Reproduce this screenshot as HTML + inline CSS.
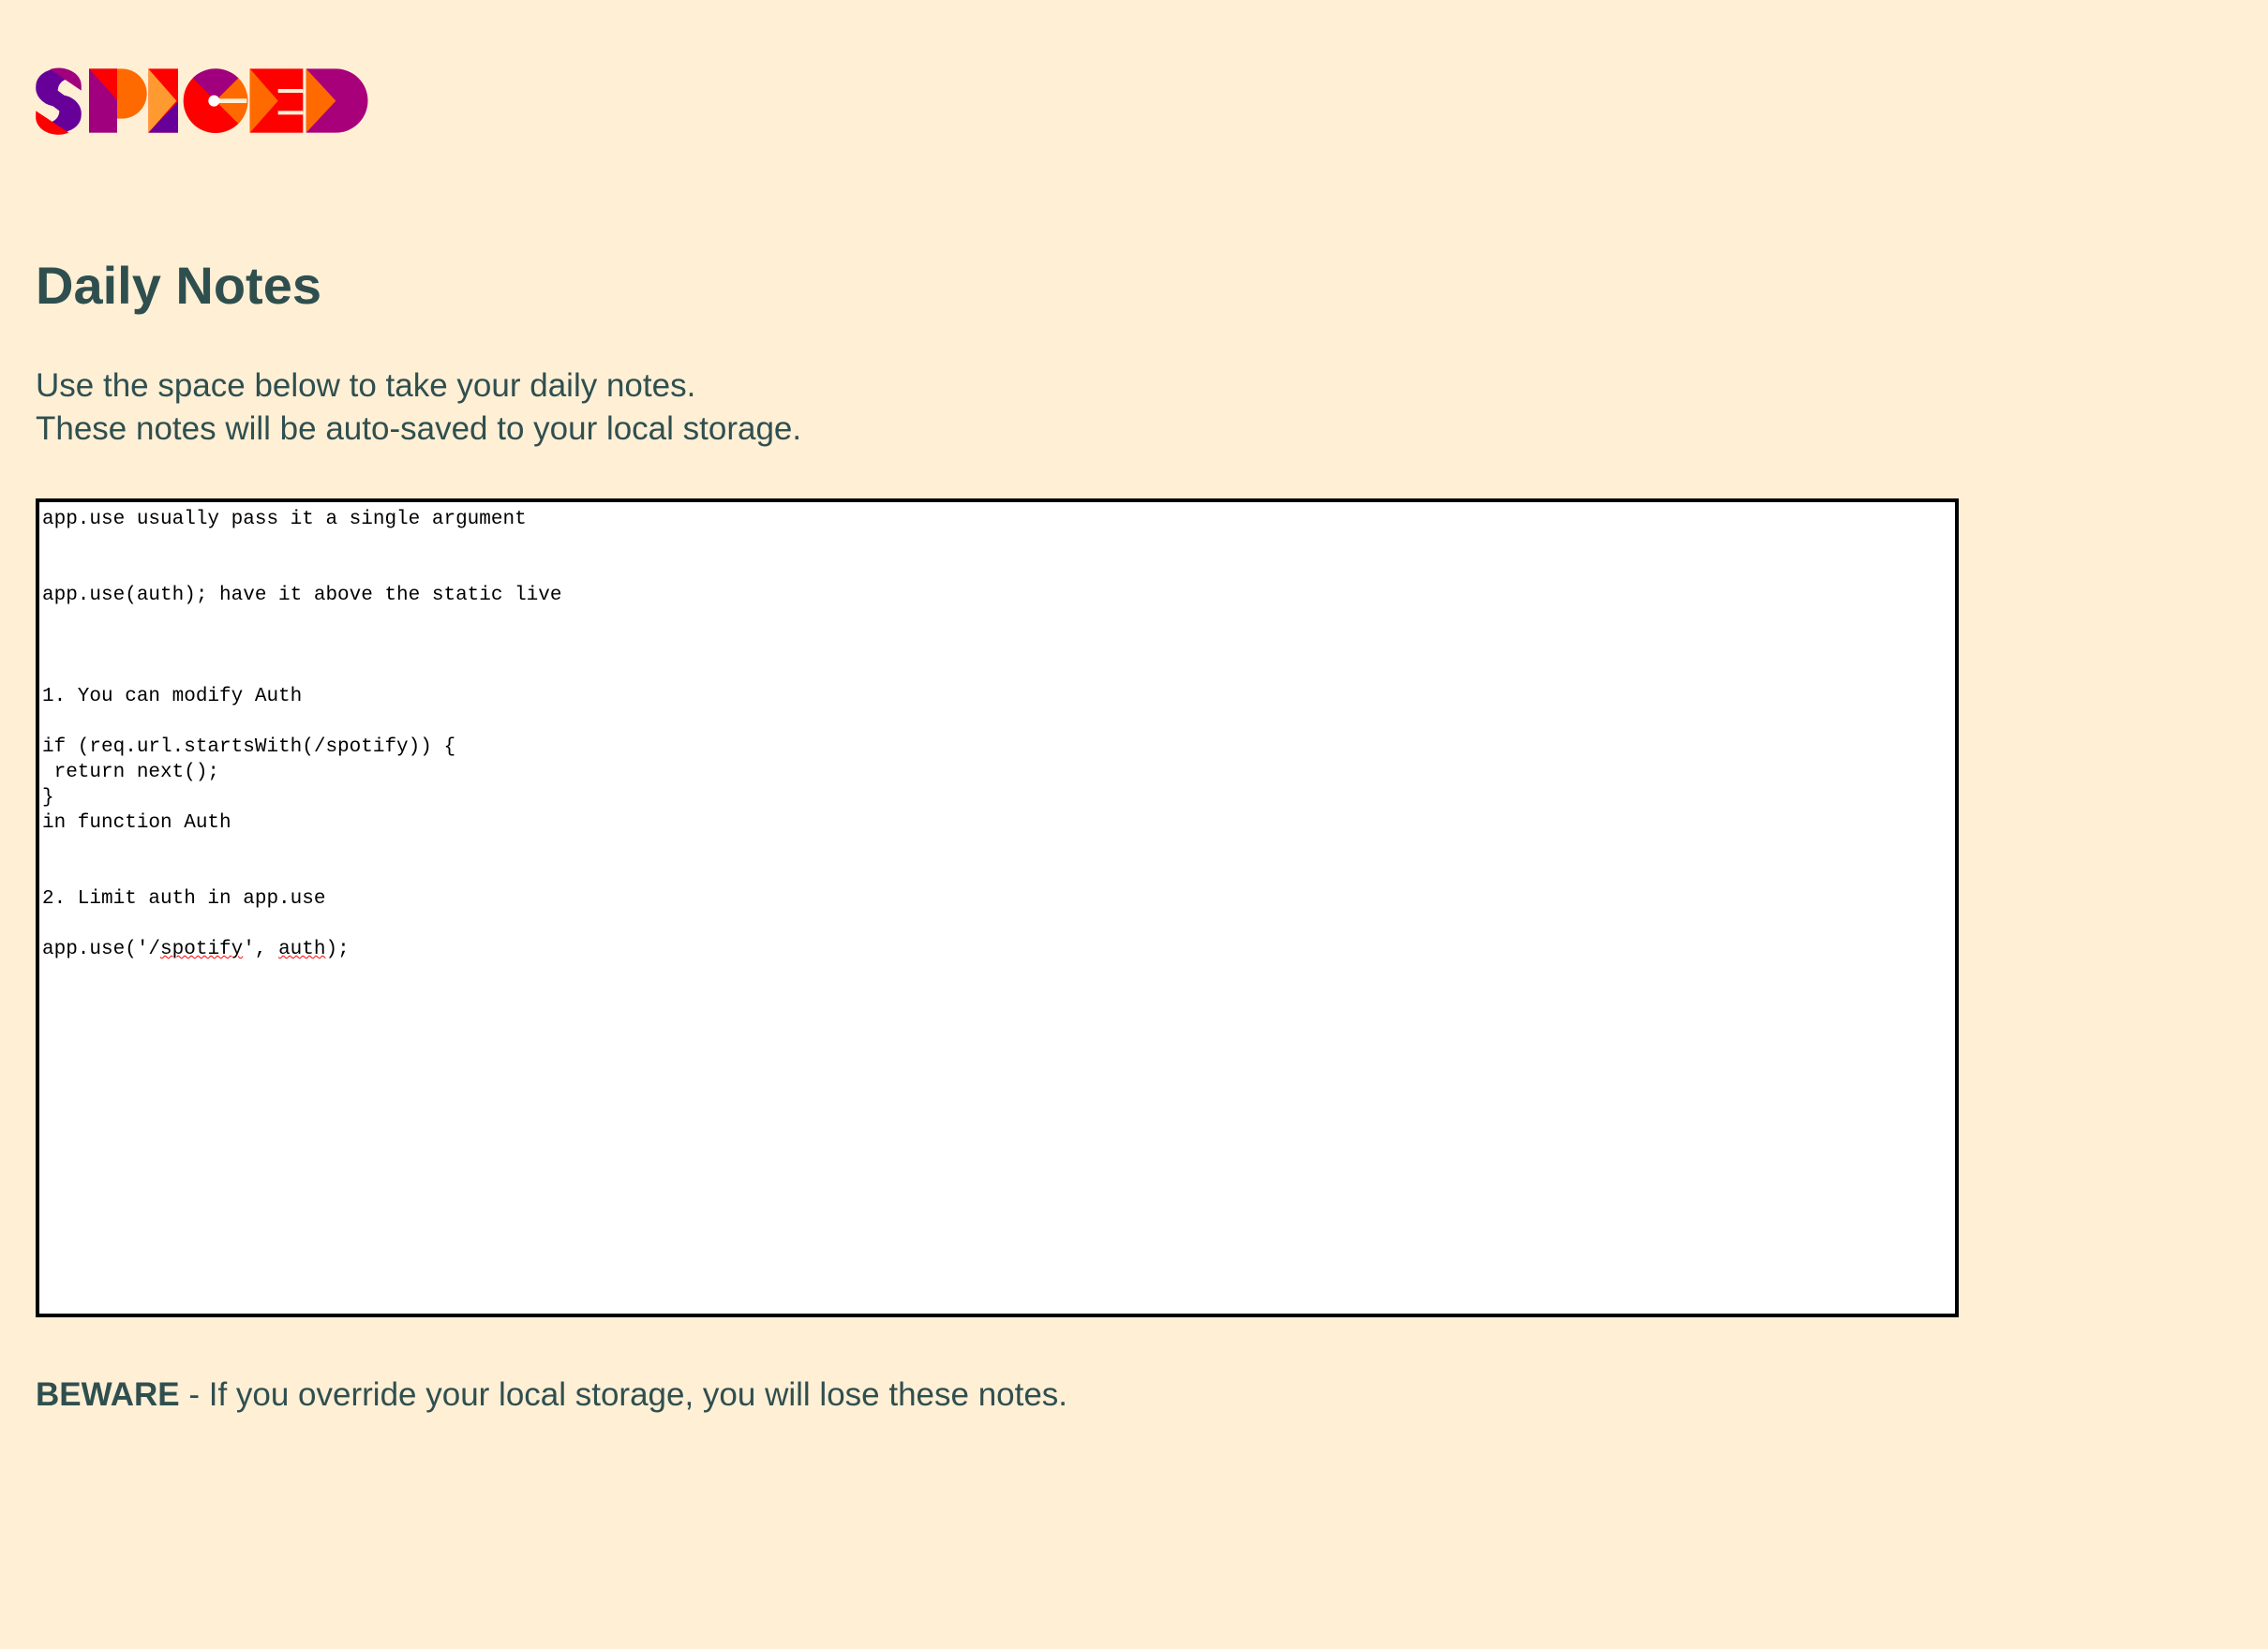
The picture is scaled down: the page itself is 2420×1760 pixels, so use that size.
<!DOCTYPE html>
<html><head><meta charset="utf-8"><style>
html,body{margin:0;padding:0;background:#ffefd5;}
body{width:2420px;height:1760px;position:relative;font-family:"Liberation Sans",sans-serif;color:#2f4f4f;}
h1{position:absolute;left:38px;top:270px;margin:0;font-size:56px;font-weight:bold;line-height:70px;}
.p{position:absolute;left:38px;top:389px;font-size:35px;line-height:46px;}
.ta{position:absolute;left:38px;top:532px;width:2044px;height:866px;border:4px solid #000;background:#fff;box-sizing:content-box;}
.ta pre{margin:0;padding:5px 0 0 3px;font-family:"Liberation Mono",monospace;font-size:21px;line-height:27px;color:#000;}
.w{text-decoration:underline wavy red;text-decoration-thickness:1px;}
.b{position:absolute;left:38px;top:1466px;font-size:35px;line-height:46px;}
</style></head><body>
<svg style="position:absolute;left:30px;top:60px" width="380" height="100" viewBox="0 0 1140 300">
<path d="M170,95 A72,55 0 0 0 25,95 A72,60 0 0 0 80,160 L100,175 A20,20 0 0 1 25,175 L25,190 A72,55 0 0 0 170,190 A72,60 0 0 0 115,125 L95,110 A20,20 0 0 1 170,110 Z" fill="#660099"/>
<path d="M70,42 A72,55 0 0 1 170,95 L170,110 Z" fill="#a0007d"/>
<path d="M25,175 L130,245 A72,55 0 0 1 25,190 Z" fill="#ff0000"/>
<rect x="195" y="40" width="90" height="205" fill="#a0007d"/>
<polygon points="195,40 285,40 285,140" fill="#ff0000"/>
<path d="M285,40 H300 A80,80 0 0 1 300,200 H285 Z" fill="#ff6a00"/>
<rect x="385" y="40" width="95" height="205" fill="#ff0000"/>
<polygon points="385,245 480,245 480,145" fill="#660099"/>
<polygon points="385,40 475,143 385,245" fill="#ff9a30"/>
<circle cx="600" cy="143" r="103" fill="#ff0000"/>
<path d="M600,143 L527,70 A103,103 0 0 1 673,70 Z" fill="#a0007d"/>
<path d="M600,143 L673,70 A103,103 0 0 1 673,216 Z" fill="#ff6a00"/>
<rect x="600" y="136" width="100" height="14" fill="#ffefd5"/>
<circle cx="595" cy="143" r="18" fill="#fff"/>
<rect x="710" y="40" width="170" height="205" fill="#ff0000"/>
<polygon points="710,40 800,143 710,245" fill="#ff6a00"/>
<rect x="800" y="105" width="80" height="12" fill="#ffefd5"/>
<rect x="800" y="175" width="80" height="12" fill="#ffefd5"/>
<path d="M890,40 H985 A102,102 0 0 1 985,245 H890 Z" fill="#a8007a"/>
<polygon points="890,40 985,143 890,245" fill="#ff6a00"/>
</svg>
<h1>Daily Notes</h1>
<div class="p">Use the space below to take your daily notes.<br>These notes will be auto-saved to your local storage.</div>
<div class="ta"><pre>app.use usually pass it a single argument


app.use(auth); have it above the static live



1. You can modify Auth

if (req.url.startsWith(/spotify)) {
 return next();
}
in function Auth


2. Limit auth in app.use

app.use('/<span class="w">spotify</span>', <span class="w">auth</span>);</pre></div>
<div class="b"><b>BEWARE</b> - If you override your local storage, you will lose these notes.</div>
</body></html>
